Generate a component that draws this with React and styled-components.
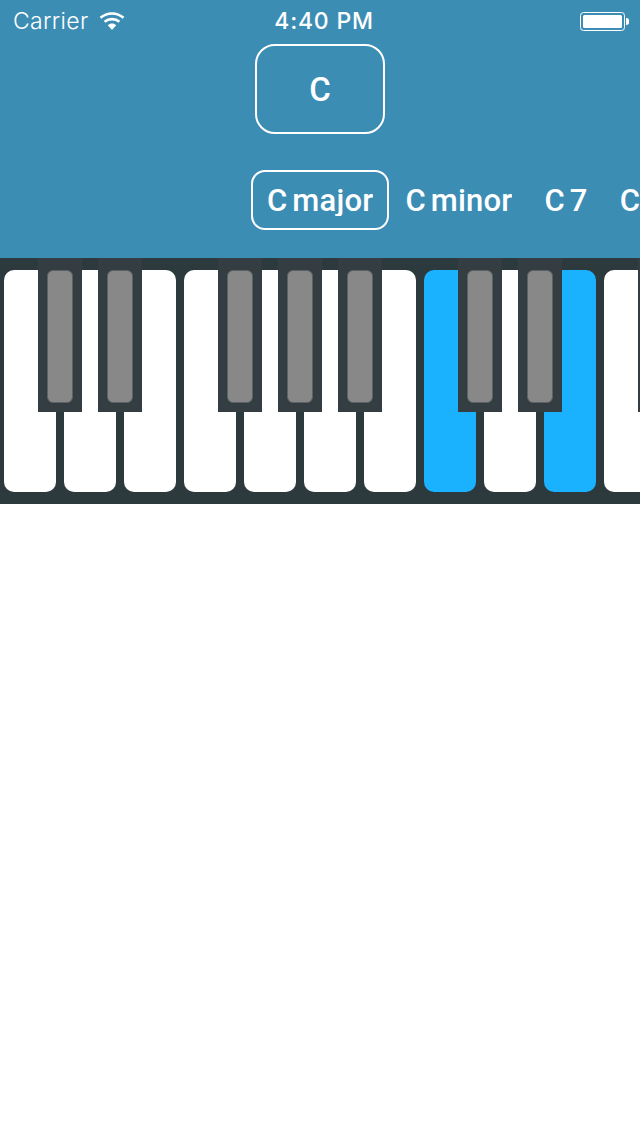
import React from "react";
import styled, { createGlobalStyle } from "styled-components";

const Global = createGlobalStyle`
  html, body { margin: 0; padding: 0; background: #fff; }
  body { font-family: Roboto, "Liberation Sans", sans-serif; }
`;

const Page = styled.div`
  width: 640px;
  height: 1136px;
  overflow: hidden;
  background: #fff;
`;
const Header = styled.header`
  height: 258px;
  background: #3c8db4;
  color: #fff;
  display: flex;
  flex-direction: column;
`;
const StatusBar = styled.div`
  height: 40px;
  padding: 2px 11px 0 13px;
  box-sizing: border-box;
  display: grid;
  grid-template-columns: 1fr auto 1fr;
  align-items: center;
  font-family: Inter, Roboto, sans-serif;
`;
const Carrier = styled.div`
  display: flex;
  align-items: center;
  gap: 11px;
  font-size: 23px;
  font-weight: 300;
  letter-spacing: 0.3px;
`;
const Clock = styled.div`
  margin-left: 6px;
  font-size: 23px;
  font-weight: 500;
  letter-spacing: 0.8px;
`;
const BatteryWrap = styled.div`
  display: flex;
  justify-content: flex-end;
`;
const RootKey = styled.div`
  box-sizing: border-box;
  align-self: center;
  width: 130px;
  height: 90px;
  margin-top: 4px;
  border: 2px solid #fff;
  border-radius: 20px;
  display: flex;
  align-items: center;
  justify-content: center;
  font-size: 33px;
  font-weight: 500;
`;
const ChordRow = styled.div`
  display: flex;
  margin-top: 36px;
  padding-left: 251px;
  overflow: hidden;
`;
const Chord = styled.div`
  box-sizing: border-box;
  flex: none;
  height: 60px;
  padding: 0 14px;
  border: 2px solid ${(p) => (p.$selected ? "#fff" : "transparent")};
  border-radius: 14px;
  display: flex;
  align-items: center;
  justify-content: center;
`;
const ChordLabel = styled.span`
  display: block;
  height: 30px;
  margin-top: 1px;
  line-height: 30px;
  overflow: hidden;
  font-size: 31px;
  font-weight: 500;
  letter-spacing: 0.2px;
  word-spacing: -3px;
  white-space: nowrap;
`;
const Keyboard = styled.section`
  position: relative;
  height: 246px;
  box-sizing: border-box;
  padding: 12px 0 12px 4px;
  background: #2c3a3e;
  display: flex;
  gap: 8px;
  overflow: hidden;
`;
const WhiteKey = styled.div`
  flex: none;
  width: 52px;
  border-radius: 10px;
  background: ${(p) => (p.$active ? "#1ab2ff" : "#fff")};
`;
const BlackKey = styled.div`
  position: absolute;
  top: 0;
  left: ${(p) => p.$left}px;
  width: 44px;
  height: 154px;
  box-sizing: border-box;
  padding: 12px 9px 9px;
  background: #343d41;
`;
const BlackCap = styled.div`
  height: 100%;
  box-sizing: border-box;
  border-radius: 6px;
  background: #888;
  border: 1px solid #596265;
`;

const Wifi = () => (
  <svg width="26" height="20" viewBox="0 0 26 20" fill="none">
    <path d="M1.500 6.800C8 1 18 1 24.500 6.800" stroke="#fff" strokeWidth="2.600" />
    <path d="M5.600 10.800C9.800 7.200 16.200 7.200 20.400 10.800" stroke="#fff" strokeWidth="2.600" />
    <path d="M8.800 14.200C11.300 12 14.700 12 17.200 14.200L13 19Z" fill="#fff" />
  </svg>
);
const Battery = () => (
  <svg width="49" height="19" viewBox="0 0 49 19">
    <rect x="0.500" y="0.500" width="44" height="18" rx="3" fill="none" stroke="#fff" />
    <rect x="3" y="3" width="39" height="13" rx="1.500" fill="#fff" />
    <path d="M46 6c1.800 0 3 .8 3 2v3c0 1.200-1.200 2-3 2Z" fill="#fff" />
  </svg>
);

const whites = Array.from({ length: 11 }, (_, i) => i);
const blacks = [38, 98, 218, 278, 338, 458, 518, 638];
const chords = ["C major", "C minor", "C 7", "C m7"];

export default function App() {
  return (
    <Page>
      <Global />
      <Header>
        <StatusBar>
          <Carrier>Carrier <Wifi /></Carrier>
          <Clock>4:40 PM</Clock>
          <BatteryWrap><Battery /></BatteryWrap>
        </StatusBar>
        <RootKey>C</RootKey>
        <ChordRow>
          {chords.map((c, i) => (
            <Chord key={c} $selected={i === 0}><ChordLabel>{c}</ChordLabel></Chord>
          ))}
        </ChordRow>
      </Header>
      <Keyboard>
        {whites.map((i) => <WhiteKey key={i} $active={i === 7 || i === 9} />)}
        {blacks.map((x) => <BlackKey key={x} $left={x}><BlackCap /></BlackKey>)}
      </Keyboard>
    </Page>
  );
}
